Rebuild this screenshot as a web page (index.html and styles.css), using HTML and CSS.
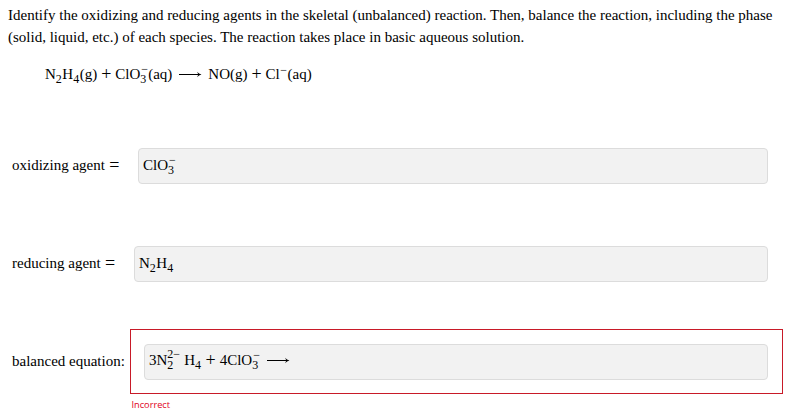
FILE: index.html
```html
<!DOCTYPE html>
<html lang="en">
<head>
  <meta charset="UTF-8">
  <meta name="viewport" content="width=device-width, initial-scale=1.0">
  <title>Redox Reaction</title>
  <link rel="stylesheet" href="styles.css">
</head>
<body>
  <p class="question"><span class="line first">Identify the oxidizing and reducing agents in the skeletal (unbalanced) reaction. Then, balance the reaction, including the phase</span> <span class="line second">(solid, liquid, etc.) of each species. The reaction takes place in basic aqueous solution.</span></p>

  <div class="chem reaction">
    <span>N<sub>2</sub>H<sub>4</sub>(g)</span>
    <span class="op">+</span>
    <span>ClO<span class="stack"><sup>−</sup><sub>3</sub></span>(aq)</span>
    <svg class="arrow" width="23" height="8" viewBox="0 0 23 8"><path class="shaft" d="M0 4.5H21"/><path d="M18.2 1.8Q19.6 4 22.5 4.5Q19.6 5 18.2 7.2L19.2 4.5Z"/></svg>
    <span>NO(g)</span>
    <span class="op">+</span>
    <span>Cl<sup>−</sup>(aq)</span>
  </div>

  <div class="row">
    <label class="oxidizing">oxidizing agent <span class="equals">=</span></label>
    <div class="field chem"><span>ClO<span class="stack"><sup>−</sup><sub>3</sub></span></span></div>
  </div>

  <div class="row">
    <label class="reducing">reducing agent <span class="equals">=</span></label>
    <div class="field chem"><span>N<sub>2</sub>H<sub>4</sub></span></div>
  </div>

  <div class="row last">
    <label class="balanced">balanced equation:</label>
    <div class="wrong">
      <div class="field chem">
        <span>3N<span class="stack charge"><sup>2−</sup><sub>2</sub></span>H<sub>4</sub></span>
        <span class="op">+</span>
        <span>4ClO<span class="stack"><sup>−</sup><sub>3</sub></span></span>
        <svg class="arrow" width="23" height="8" viewBox="0 0 23 8"><path class="shaft" d="M0 4.5H21"/><path d="M18.2 1.8Q19.6 4 22.5 4.5Q19.6 5 18.2 7.2L19.2 4.5Z"/></svg>
      </div>
    </div>
  </div>
  <div class="message">Incorrect</div>
</body>
</html>
```
FILE: styles.css
```css
body {
  margin: 0;
  padding: 4px 8px 0;
  background-color: white;
  color: black;
  font-family: "Liberation Serif", "Times New Roman", serif;
  font-size: 15px;
}
.question {
  margin: 0;
  line-height: 22px;
}
.line {
  display: block;
  white-space: nowrap;
}
.chem {
  display: flex;
  align-items: center;
  line-height: 20px;
  white-space: nowrap;
}
.chem sub, .chem sup {
  font-size: 12px;
  line-height: 0;
  position: relative;
  vertical-align: baseline;
}
.chem sub {
  top: 4px;
  margin-right: 0.5px;
}
.chem sup {
  top: -5px;
}
.chem sup:last-child {
  margin: 0 0.5px;
}
.stack {
  display: inline-grid;
  line-height: 0;
  margin-right: 1px;
}
.stack sub, .stack sup {
  grid-area: 1 / 1;
}
.stack sup {
  top: -6px;
  left: 1px;
}
.charge {
  margin-right: 4px;
}
.charge sup {
  top: -7px;
  left: 0;
}
.op, .equals {
  font-size: 18px;
  line-height: 16px;
}
.op {
  margin: 0 4px;
}
.equals {
  vertical-align: -1px;
  margin-left: 0.5px;
}
.arrow {
  margin: 0 6px 0 7px;
}
.shaft {
  stroke: black;
}
.reaction {
  margin: 16px 0 0 37px;
  height: 20px;
}
.row {
  display: flex;
  align-items: center;
  height: 36px;
  margin: 62px 15px 0 4px;
}
.reaction + .row {
  margin-top: 64px;
}
label {
  line-height: 18px;
  padding-bottom: 2px;
}
.oxidizing {
  width: 126px;
}
.reducing {
  width: 122px;
}
.balanced {
  width: 118px;
}
.field {
  flex: 1;
  box-sizing: border-box;
  height: 36px;
  padding: 0 0 2px 4px;
  background-color: #f2f2f2;
  border: 1px solid #dcdcdc;
  border-radius: 4px;
}
.row.last {
  height: 65px;
  margin: 47px 0 0 4px;
}
.wrong {
  display: flex;
  box-sizing: border-box;
  width: 653px;
  height: 65px;
  padding: 14px 14px 14px 13px;
  border: 1px solid #c81a28;
}
.wrong .field {
  padding-bottom: 4px;
}
.message {
  margin: 4px 0 0 123.5px;
  color: #e0001b;
  font-family: "Open Sans", sans-serif;
  font-size: 9.2px;
  line-height: 13px;
}
```
